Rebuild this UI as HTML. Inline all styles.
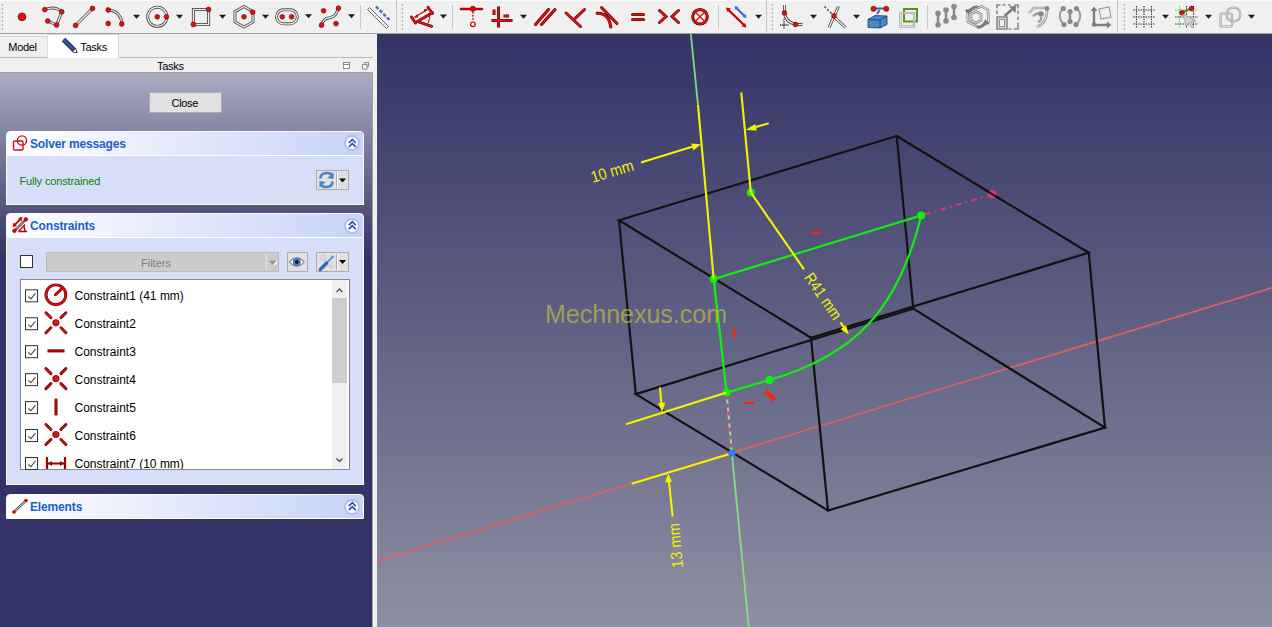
<!DOCTYPE html>
<html><head><meta charset="utf-8">
<style>
*{box-sizing:border-box;margin:0;padding:0}
html,body{width:1272px;height:627px;overflow:hidden;background:#f0f0f0;font-family:"Liberation Sans",sans-serif;position:relative}
.abs{position:absolute}
#tb{position:absolute;left:0;top:0;width:1272px;height:34px;background:#f0f0f0;border-bottom:1px solid #a0a0a0}
#tb svg{position:absolute;left:0;top:0}
#left{position:absolute;left:0;top:34px;width:377px;height:593px;background:#f0f0f0}
#panel{position:absolute;left:0;top:38px;width:373px;height:555px;border-top:1px solid #a0a0a0;border-right:1px solid #a0a0a0;
 background:linear-gradient(to bottom, rgb(171,171,193) 0px, rgb(51,51,101) 186px, rgb(51,51,101) 100%)}
#vp{position:absolute;left:377px;top:34px;width:895px;height:593px;
 background:linear-gradient(to bottom, rgb(51,51,102) 0%, rgb(143,143,163) 100%)}
#vp svg{position:absolute;left:-377px;top:-34px}
.t{position:absolute;white-space:nowrap;font-size:12px;color:#000;line-height:1}
.box{position:absolute;left:6px;width:358px}
.hdr{position:absolute;left:0;top:0;width:358px;height:25px;border:1px solid #fff;border-radius:4px 4px 0 0;
 background:linear-gradient(to right,#ffffff 0%,#c7d3f7 100%)}
.cnt{position:absolute;left:0;width:358px;background:#d6dff7;border:1px solid #fff;border-top:none}
.htxt{position:absolute;left:24px;top:6px;font-size:12px;font-weight:bold;color:#215dc6;white-space:nowrap;line-height:1;letter-spacing:-0.15px}
.coll{position:absolute;width:16px;height:16px;border-radius:50%;background:#fff;border:2px solid #b8c0d8}
</style></head><body>
<div id="tb"><svg width="1272" height="34" viewBox="0 0 1272 34">
<defs>
<g id="arr"><path d="M-3.5,-2 L3.5,-2 L0,2 Z" fill="#1a1a1a"/></g>
<g id="grip"><path d="M3,4.8 L3,6.6 L1.2,6.6 Z M3,8.8 L3,10.600000000000001 L1.2,10.600000000000001 Z M3,12.8 L3,14.600000000000001 L1.2,14.600000000000001 Z M3,16.8 L3,18.6 L1.2,18.6 Z M3,20.8 L3,22.6 L1.2,22.6 Z M3,24.8 L3,26.6 L1.2,26.6 Z M3,28.8 L3,30.6 L1.2,30.6 Z " fill="#8a8a8a"/></g>
</defs>
<rect x="0" y="0" width="1272" height="1" fill="#fbfbfb"/>
<!-- toolbar 1 -->
<use href="#grip" x="0" y="-1"/>
<g fill="#e01010" stroke="#6a0000" stroke-width="0.7">
<circle cx="22" cy="16.8" r="3.9"/>
</g>
<!-- double lines (outline) -->
<g fill="none" stroke="#505050" stroke-width="3">
<path d="M44.8,9.6 Q55,5.5 61.8,11.8 L56.6,25 L47.8,21"/>
<path d="M75.5,25.5 L92.5,8.5"/>
<path d="M108.2,10 A13.6,13.6 0 0 1 121.8,24"/>
<circle cx="157.3" cy="16.8" r="9.6"/>
<rect x="193.4" y="9.5" width="15.2" height="15"/>
<path d="M244,6.5 L253,11.6 L253,22 L244,27.1 L235,22 L235,11.6 Z"/>
<rect x="276.5" y="9.8" width="20.8" height="14" rx="7"/>
<path d="M321.5,25.2 C324,16 330,19 334,16 C337,14 337,11 338.5,8.2"/>
</g>
<g fill="none" stroke="#f2f2f2" stroke-width="1.2">
<path d="M44.8,9.6 Q55,5.5 61.8,11.8 L56.6,25 L47.8,21"/>
<path d="M75.5,25.5 L92.5,8.5"/>
<path d="M108.2,10 A13.6,13.6 0 0 1 121.8,24"/>
<circle cx="157.3" cy="16.8" r="9.6"/>
<rect x="193.4" y="9.5" width="15.2" height="15"/>
<path d="M244,6.5 L253,11.6 L253,22 L244,27.1 L235,22 L235,11.6 Z"/>
<rect x="276.5" y="9.8" width="20.8" height="14" rx="7"/>
<path d="M321.5,25.2 C324,16 330,19 334,16 C337,14 337,11 338.5,8.2"/>
</g>
<g fill="#e01010" stroke="#6a0000" stroke-width="0.6">
<circle cx="44.8" cy="9.6" r="2.4"/><circle cx="61.8" cy="11.8" r="2.4"/><circle cx="47.8" cy="21" r="2.4"/><circle cx="56.6" cy="25" r="2.4"/>
<circle cx="75.5" cy="25.5" r="2.4"/><circle cx="92.5" cy="8.5" r="2.4"/>
<circle cx="108.2" cy="10" r="2.4"/><circle cx="108.2" cy="23.5" r="2.4"/><circle cx="121.8" cy="24" r="2.4"/>
<circle cx="157.3" cy="16.8" r="2.4"/><circle cx="166.4" cy="16.8" r="2.4"/>
<circle cx="193.4" cy="24.5" r="2.4"/><circle cx="208.6" cy="9.5" r="2.4"/>
<circle cx="244" cy="16.8" r="2.4"/><circle cx="252.6" cy="12.2" r="2.4"/>
<circle cx="282.3" cy="16.8" r="2.4"/><circle cx="291.6" cy="16.8" r="2.4"/>
<circle cx="323.6" cy="10.8" r="2.4"/><circle cx="338.5" cy="8.2" r="2.4"/><circle cx="321.5" cy="25.2" r="2.4"/><circle cx="336" cy="23.6" r="2.4"/>
</g>
<use href="#arr" x="136.5" y="16.8"/><use href="#arr" x="179.5" y="16.8"/><use href="#arr" x="222.5" y="16.8"/><use href="#arr" x="265.5" y="16.8"/><use href="#arr" x="308.5" y="16.3"/><use href="#arr" x="351.5" y="16.3"/>
<rect x="360" y="5" width="1" height="24" fill="#c8c8c8"/>
<!-- construction -->
<path d="M367.5,9.5 L369.5,7.5 L388.5,26.5 L386.5,28.5 Z" fill="#f4f4f4" stroke="#555" stroke-width="0.9"/>
<path d="M376,6.5 L390,20.5" stroke="#3a6fb0" stroke-width="2.3" stroke-dasharray="3.4,1.8"/>
<rect x="396" y="0" width="1" height="34" fill="#c4c4c4"/>
<!-- toolbar 2 -->
<use href="#grip" x="400" y="-1"/>
<g fill="none" stroke="#5a0000" stroke-width="2.8" stroke-linecap="round">
<path d="M417.3,21.5 L432.4,12.7 M417.3,21.5 L431.7,26.3"/>
<path d="M411.5,17 L415.5,23 M428,7.2 L432.5,13.5"/>
</g>
<g fill="none" stroke="#e01010" stroke-width="1.7" stroke-linecap="round">
<path d="M417.3,21.5 L432.4,12.7 M417.3,21.5 L431.7,26.3"/>
<path d="M411.5,17 L415.5,23 M428,7.2 L432.5,13.5"/>
</g>
<path d="M428.5,13.8 Q431,18.5 428.2,23.2" stroke="#b00000" stroke-width="1" fill="none"/>
<path d="M415,17 L427,9.8" stroke="#c00000" stroke-width="1.1"/>
<path d="M413.5,17.8 L417.5,14 L418,17.5 Z M428.3,9 L424.3,12.6 L423.9,9.3 Z" fill="#d00000"/>
<use href="#arr" x="443.4" y="16.5"/>
<rect x="452" y="5" width="1" height="24" fill="#c8c8c8"/>
<path d="M461,9 L482,9" stroke="#c00000" stroke-width="2.6" stroke-linecap="round"/>
<circle cx="472.9" cy="8.8" r="2.6" fill="#d00" stroke="#600" stroke-width="0.6"/>
<path d="M472.9,12 L472.9,21" stroke="#c00000" stroke-width="1.5" stroke-dasharray="1.5,1.6"/>
<circle cx="472.9" cy="24.3" r="2.3" fill="#fff" stroke="#b00" stroke-width="1.2"/>
<g stroke="#5a0000" stroke-width="3" fill="none">
<path d="M498.5,6.5 L498.5,27.5 M491.5,20.5 L512.5,20.5 M494,9.5 L494,15 M503.5,16 L509,16"/>
</g>
<g stroke="#e01010" stroke-width="1.9" fill="none">
<path d="M498.5,7 L498.5,27 M492,20.5 L512,20.5 M494,10 L494,14.5 M504,16 L508.5,16"/>
</g>
<use href="#arr" x="523.5" y="16.8"/>
<g stroke="#5a0000" stroke-width="3" fill="none" stroke-linecap="round">
<path d="M535.5,24.5 L548.5,9.5 M541.5,24.5 L555,9.5"/>
<path d="M566,13 L580.5,26.5 M574,19.5 L584.5,9.5"/>
<path d="M601.5,7.5 L617,23.5 M597,13.3 Q609,13 610.7,27"/>
<path d="M632.5,14.5 L643.5,14.5 M632.5,19.5 L643.5,19.5"/>
<path d="M659.5,10.5 L666,16.5 L659.5,22.5 M678.5,10.5 L672,16.5 L678.5,22.5"/>
<circle cx="700" cy="16.8" r="7.3"/>
</g>
<g stroke="#e01010" stroke-width="1.8" fill="none" stroke-linecap="round">
<path d="M535.5,24.5 L548.5,9.5 M541.5,24.5 L555,9.5"/>
<path d="M566,13 L580.5,26.5 M574,19.5 L584.5,9.5"/>
<path d="M601.5,7.5 L617,23.5 M597,13.3 Q609,13 610.7,27"/>
<path d="M632.5,14.5 L643.5,14.5 M632.5,19.5 L643.5,19.5"/>
<path d="M659.5,10.5 L666,16.5 L659.5,22.5 M678.5,10.5 L672,16.5 L678.5,22.5"/>
<circle cx="700" cy="16.8" r="7.3"/>
<path d="M696,12.8 L704,20.8 M704,12.8 L696,20.8" stroke-width="1.3"/>
</g>
<rect x="718" y="5" width="1" height="24" fill="#c8c8c8"/>
<path d="M727,8.5 L745.5,26.5" stroke="#c00000" stroke-width="2.2"/>
<path d="M726,7.5 L731,8.5 L727.5,12 Z M746.5,27.5 L741.5,26.5 L745,23 Z" fill="#d00"/>
<path d="M736,7.5 L745,16.5" stroke="#3a70c0" stroke-width="2.2"/>
<path d="M734.5,6 L738.5,7 L735.5,10 Z M746.5,18 L742.5,17 L745.5,14 Z" fill="#3a70c0"/>
<use href="#arr" x="758.5" y="16.8"/>
<rect x="766" y="0" width="1" height="34" fill="#c4c4c4"/>
<!-- toolbar 3 -->
<use href="#grip" x="770" y="-1"/>
<g fill="none" stroke="#505050" stroke-width="3"><path d="M784.5,5 L784.5,13 Q785.5,22 795.5,24.5 L802.5,24.5"/></g>
<g fill="none" stroke="#f2f2f2" stroke-width="1.2"><path d="M784.5,5 L784.5,13 Q785.5,22 795.5,24.5 L802.5,24.5"/></g>
<path d="M784,19 L784,29 M780,25 L789,25" stroke="#333" stroke-width="1.3" stroke-dasharray="1.3,0.8"/>
<circle cx="784.5" cy="13" r="2.4" fill="#e01010" stroke="#6a0000" stroke-width="0.6"/>
<circle cx="795.5" cy="24.5" r="2.4" fill="#e01010" stroke="#6a0000" stroke-width="0.6"/>
<use href="#arr" x="813.5" y="16.8"/>
<g fill="none" stroke="#505050" stroke-width="3"><path d="M838.5,6.5 L829,27.5 M834.5,17 L845.5,27.5"/></g>
<g fill="none" stroke="#f2f2f2" stroke-width="1.2"><path d="M838.5,6.5 L829,27.5 M834.5,17 L845.5,27.5"/></g>
<path d="M824.5,6.5 L832,14" stroke="#505050" stroke-width="1.6" stroke-dasharray="2,2"/>
<circle cx="834" cy="16" r="2.4" fill="#e01010" stroke="#6a0000" stroke-width="0.6"/>
<use href="#arr" x="856.5" y="16.8"/>
<path d="M868,19.5 L875,15.5 L887,16 L887,24.5 L880,28 L868,27.5 Z" fill="#4a86c8" stroke="#1a3a6a" stroke-width="0.8"/>
<path d="M868,19.5 L880,20 L887,16 M880,20 L880,28" fill="none" stroke="#1a3a6a" stroke-width="0.8"/>
<path d="M874,8.5 L886,8.5" stroke="#3a6aa8" stroke-width="2"/>
<path d="M879.5,10 L877,14" stroke="#3a6aa8" stroke-width="2"/>
<circle cx="873.5" cy="8.8" r="2.6" fill="#e01010" stroke="#6a0000" stroke-width="0.6"/>
<circle cx="886.3" cy="8.8" r="2.6" fill="#e01010" stroke="#6a0000" stroke-width="0.6"/>
<rect x="904" y="9" width="13" height="12.5" fill="none" stroke="#4f9a10" stroke-width="2"/>
<rect x="900.5" y="13" width="13.5" height="13.5" fill="none" stroke="#9a9a9a" stroke-width="2.2"/>
<rect x="900.5" y="13" width="13.5" height="13.5" fill="none" stroke="#f2f2f2" stroke-width="0.8"/>
<rect x="927" y="5" width="1" height="24" fill="#c8c8c8"/>
<g fill="#8a8a8a">
<path d="M938,14 L938,24" stroke="#8a8a8a" stroke-width="2.5"/><circle cx="938" cy="13.3" r="2.8"/><circle cx="938" cy="25" r="2.8"/>
<path d="M946,10 L946,21" stroke="#8a8a8a" stroke-width="2.5"/><circle cx="946" cy="10" r="2.8"/><circle cx="946" cy="21" r="2.8"/>
<path d="M954,6 L954,18" stroke="#8a8a8a" stroke-width="2.5"/><circle cx="954" cy="6.5" r="2.8"/><circle cx="954" cy="17.5" r="2.8"/>
</g>
<g fill="none" stroke="#8a8a8a" stroke-width="2.6"><path d="M982,6.5 L988,10 L988.5,22 L979,27.5 L968,22 L967.5,10.5 Z"/><path d="M976,11.5 L981,14 L981,20.5 L976,23 L971,20.5 L971,14 Z"/></g>
<g fill="none" stroke="#f0f0f0" stroke-width="0.9"><path d="M982,6.5 L988,10 L988.5,22 L979,27.5 L968,22 L967.5,10.5 Z"/><path d="M976,11.5 L981,14 L981,20.5 L976,23 L971,20.5 L971,14 Z"/></g>
<path d="M968,12 Q970,6 977,5.5 L979,7.5 Q973,8 971,12.5 Z M964.5,10 L970.5,9 L969,15 Z" fill="#7a7a7a"/>
<path d="M987,22 Q985,28 978,28.5 L976,26.5 Q982,26 984,21.5 Z M989.5,24 L983.5,25 L985,19 Z" fill="#7a7a7a"/>
<g fill="none" stroke="#8a8a8a" stroke-width="1.6">
<path d="M997,8.5 L997,5 L1000.5,5 M1002.5,5 L1005.5,5 M1008,5 L1011,5 M1014,5 L1018,5 L1018,8.5 M1018,10.5 L1018,14 M1018,16.5 L1018,20 M1018,22.5 L1018,29 L1014,29 M1011.5,29 L1008.5,29 M997,10.5 L997,14"/>
</g>
<rect x="997" y="17" width="10" height="12" fill="none" stroke="#8a8a8a" stroke-width="1.6"/><rect x="999.3" y="19.3" width="5.4" height="7.4" fill="none" stroke="#8a8a8a" stroke-width="1.2"/>
<path d="M1004.5,16 L1012,9.5" stroke="#7a7a7a" stroke-width="2.6"/><path d="M1009,6.5 L1016,6 L1015.5,13 Z" fill="#7a7a7a"/>
<g fill="none" stroke="#9a9a9a" stroke-width="2.4"><path d="M1029,13 L1034,8 L1047,8 Q1048,22 1037,27 M1033,16 Q1038,12 1042,14 M1038,22 Q1042,20 1041,17"/></g>
<g fill="none" stroke="#f2f2f2" stroke-width="0.8"><path d="M1029,13 L1034,8 L1047,8 Q1048,22 1037,27"/></g>
<circle cx="1047" cy="8.5" r="2.4" fill="#8a8a8a"/><circle cx="1041" cy="14" r="2.8" fill="#8a8a8a"/>
<g fill="none" stroke="#9a9a9a" stroke-width="1.8"><path d="M1063,8 Q1056,16 1064,25 M1077,8 Q1084,16 1076,25"/></g>
<path d="M1070,11 L1070,21" stroke="#8a8a8a" stroke-width="2.4"/>
<g fill="#8a8a8a"><circle cx="1063.3" cy="8.5" r="2.6"/><circle cx="1064" cy="24.5" r="2.6"/><circle cx="1076.5" cy="8.5" r="2.6"/><circle cx="1076" cy="24.5" r="2.6"/><circle cx="1070" cy="11.5" r="2.6"/><circle cx="1070" cy="21.5" r="2.6"/></g>
<path d="M1094,25 L1094,9 M1094,25 L1109,25" stroke="#7e7e7e" stroke-width="2.4" fill="none"/>
<path d="M1090.5,11 L1094,6.5 L1097.5,11 Z M1107,21.5 L1111.5,25 L1107,28.5 Z" fill="#7e7e7e"/>
<circle cx="1094" cy="24.5" r="2.3" fill="#7e7e7e"/>
<path d="M1099,9 L1109,7 L1111,17 L1101,19 Z" fill="none" stroke="#9a9a9a" stroke-width="1.1"/>
<rect x="1117" y="0" width="1" height="34" fill="#c4c4c4"/>
<!-- toolbar 4 -->
<use href="#grip" x="1122" y="-1"/>
<g stroke="#3a3a3a" stroke-width="1.1" stroke-dasharray="1.6,0.9" fill="none">
<path d="M1136.5,6 L1136.5,28 M1144,6 L1144,28 M1151.5,6 L1151.5,28 M1133,10 L1155,10 M1133,17 L1155,17 M1133,24 L1155,24"/>
</g>
<use href="#arr" x="1165.5" y="16.8"/>
<g stroke="#3a3a3a" stroke-width="1.1" stroke-dasharray="1.6,0.9" fill="none">
<path d="M1186.5,6 L1186.5,28 M1193.5,6 L1193.5,28 M1175,17 L1198,17 M1175,24 L1198,24"/>
</g>
<path d="M1179.5,6 L1179.5,28 M1175,10 L1198,10" stroke="#40e040" stroke-width="1.1" stroke-dasharray="1.6,0.9"/>
<path d="M1182,12.5 L1192,8" stroke="#40a020" stroke-width="2"/>
<circle cx="1182" cy="12.8" r="2.4" fill="#e01010" stroke="#6a0000" stroke-width="0.6"/>
<circle cx="1191.5" cy="8.5" r="2.4" fill="#e01010" stroke="#6a0000" stroke-width="0.6"/>
<path d="M1183,14 L1196,21 L1191,22 L1194,27 L1192,28 L1189,23 L1186,26 Z" fill="#d0d0cc" stroke="#9a9a9a" stroke-width="0.7"/>
<use href="#arr" x="1208.5" y="16.8"/>
<rect x="1220.5" y="13.5" width="11.5" height="13" rx="1.5" fill="none" stroke="#9a9a9a" stroke-width="2.2"/>
<rect x="1220.5" y="13.5" width="11.5" height="13" rx="1.5" fill="none" stroke="#f2f2f2" stroke-width="0.7"/>
<circle cx="1233.5" cy="14.5" r="7" fill="none" stroke="#9a9a9a" stroke-width="2.2"/>
<circle cx="1233.5" cy="14.5" r="7" fill="none" stroke="#f2f2f2" stroke-width="0.7"/>
<use href="#arr" x="1251.5" y="16.8"/>
</svg>
</div>
<div id="left">
  <!-- tab bar -->
  <div class="abs" style="left:0;top:23px;width:373px;height:1px;background:#b9b9b9"></div>
  <div class="abs" style="left:0;top:2px;width:48px;height:21px;border-top:1px solid #d9d9d9;border-right:1px solid #d9d9d9;background:#f0f0f0"></div>
  <div class="abs" style="left:47px;top:0px;width:72px;height:24px;background:#fff;border:1px solid #d9d9d9;border-bottom:none"></div>
  <div class="t" style="left:8.3px;top:8px;font-size:11px;letter-spacing:-0.3px">Model</div>
  <div class="t" style="left:80.3px;top:8px;font-size:11px;letter-spacing:-0.3px">Tasks</div>
  <div class="t" style="left:157px;top:26.6px;font-size:11px;letter-spacing:-0.3px">Tasks</div>
  <div id="panel"></div>
</div>
<div id="vp"><svg width="1272" height="627" viewBox="0 0 1272 627" style="position:absolute;left:-377px;top:-34px">
<defs><clipPath id="vpc"><rect x="377" y="34" width="895" height="593"/></clipPath></defs>
<g clip-path="url(#vpc)">
<!-- X axis -->
<path d="M377,561.1 L1272,287.9" stroke="#d86262" stroke-width="1.8" fill="none"/>
<!-- Y axis segments -->
<path d="M690.8,34 L698,104.8" stroke="#78e078" stroke-width="1.8" fill="none"/>
<path d="M731.9,453.2 L748.7,627" stroke="#80e080" stroke-width="1.8" fill="none"/>
<!-- box edges -->
<g stroke="#121212" stroke-width="2.2" fill="none" stroke-linecap="round">
<path d="M896.7,136 L619,220.3 L811,337.8 L1088.8,252.7 Z"/>
<path d="M635.8,394.1 L828,510.5 L1105,427.6 L913.3,308.6 Z"/>
<path d="M619,220.3 L635.8,394.1 M811,337.8 L828,510.5 M1088.8,252.7 L1105,427.6 M896.7,136 L913.3,308.6"/>
</g>
<!-- dashed P3-origin -->
<path d="M726.6,392.6 L731.9,453.2" stroke="#90e890" stroke-width="2" fill="none"/>
<path d="M726.6,392.6 L731.9,453.2" stroke="#c83a80" stroke-width="2" fill="none" stroke-dasharray="4,4" stroke-dashoffset="-3"/>
<!-- magenta dash-dot -->
<path d="M921.2,215.5 L992.4,194.3" stroke="#d03a78" stroke-width="2.2" fill="none" stroke-dasharray="5.4,4.3,1.8,4.5" stroke-dashoffset="-4.3"/>
<!-- sketch -->
<g stroke="#10f010" stroke-width="2.2" fill="none">
<path d="M713.7,279.1 L921.2,215.5"/>
<path d="M713.7,279.1 L726.6,392.6"/>
<path d="M726.6,392.6 L769.5,380"/>
<path d="M769.5,380 C856,354.8 898.4,308.6 921.2,215.5"/>
</g>
<g fill="#10f010">
<circle cx="713.7" cy="279.1" r="4"/>
<circle cx="921.2" cy="215.5" r="4"/>
<circle cx="726.6" cy="392.6" r="4"/>
<circle cx="769.5" cy="380" r="4"/>
<circle cx="750.8" cy="192.4" r="4"/>
</g>
<!-- yellow dims -->
<g stroke="#f4f400" stroke-width="2.1" fill="none">
<path d="M698,104.8 L713.7,279.1"/>
<path d="M741.3,92.5 L750.8,192.4"/>
<path d="M641,162.5 L693,146.6"/>
<path d="M768.8,123.3 L754,127.6"/>
<path d="M750.8,192.4 L804,269.3"/>
<path d="M840.5,322.4 L845,328.8"/>
<path d="M625.9,424.3 L726.6,392.6"/>
<path d="M660,387.4 L661.4,404"/>
<path d="M631.7,483.7 L731.9,453.2"/>
<path d="M672.6,516.5 L669,481.5"/>
</g>
<g fill="#f4f400">
<path d="M701,144.3 L691.3,143.6 L693.4,150.4 Z"/>
<path d="M745.6,130 L755.2,123.9 L756.8,130.6 Z"/>
<path d="M848.8,334.6 L840.4,329.3 L846.1,325.3 Z"/>
<path d="M662.1,412.3 L658.2,403.2 L665.2,402.6 Z"/>
<path d="M668.2,473.4 L665.1,482.6 L672.1,481.9 Z"/>
</g>
<circle cx="992.4" cy="194.3" r="4.3" fill="#d03a78"/>
<path d="M979,186 L1000,199" stroke="#121212" stroke-width="2"/>
<circle cx="731.9" cy="453.2" r="3.6" fill="#3a7ae8"/>
<!-- red constraint glyphs -->
<g stroke="#ff2200" stroke-width="2.2" fill="none">
<path d="M810.8,233 L821,233"/>
<path d="M734,327.8 L734,338"/>
<path d="M743.9,403 L754.1,403"/>
<path d="M766.3,390.3 L775.7,399.4"/>
<path d="M764,393.6 Q771,393 772.3,401.5"/>
</g>
</g>
<!-- texts -->
<g font-family="Liberation Sans" font-size="16" fill="#f0f000">
<text x="0" y="0" transform="translate(592.7,182.8) rotate(-16.7) scale(0.9,1)">10 mm</text>
<text x="0" y="0" transform="translate(803.5,277.5) rotate(55.4) scale(0.88,1)">R41 mm</text>
<text x="0" y="0" transform="translate(683,567.5) rotate(-95) scale(0.92,1)">13 mm</text>
</g>
<text x="545" y="322.7" font-family="Liberation Sans" font-size="25" fill="#c8c040" fill-opacity="0.66">Mechnexus.com</text>
</svg>
</div>
<!-- Close button -->
<div class="abs" style="left:149px;top:92px;width:73px;height:21px;background:#e1e1e1;border:1px solid #adadad"></div>
<div class="t" style="left:171.5px;top:98px;font-size:11px;letter-spacing:-0.3px">Close</div>

<!-- Solver messages -->
<div class="box" style="top:131px;height:74px">
  <div class="hdr"></div>
  <div class="cnt" style="top:25px;height:49px"></div>
</div>
<div class="htxt" style="left:30px;top:137.8px">Solver messages</div>
<div class="coll" style="left:344.4px;top:135.4px"></div>
<div class="t" style="left:19.5px;top:175.8px;font-size:11px;color:#0b800b;letter-spacing:-0.15px">Fully constrained</div>
<div class="abs" style="left:316px;top:170px;width:33px;height:20px;background:#e1e1e1;border:1px solid #adadad"></div>
<div class="abs" style="left:336px;top:172px;width:1px;height:16px;background:#adadad"></div>

<!-- Constraints -->
<div class="box" style="top:213px;height:272px">
  <div class="hdr"></div>
  <div class="cnt" style="top:25px;height:247px"></div>
</div>
<div class="htxt" style="left:30px;top:219.5px">Constraints</div>
<div class="coll" style="left:344.4px;top:217.6px"></div>
<div class="abs" style="left:20px;top:254.5px;width:13px;height:13px;background:#fff;border:1px solid #333"></div>
<div class="abs" style="left:46px;top:252px;width:233px;height:20px;background:#cccccc;border:1px solid #bcbcbc"></div>
<div class="abs" style="left:264.5px;top:254px;width:1px;height:16px;background:#a0a0a0"></div>
<div class="t" style="left:141px;top:257.5px;font-size:11px;color:#808080">Filters</div>
<div class="abs" style="left:287px;top:252px;width:21px;height:20px;background:#e1e1e1;border:1px solid #adadad"></div>
<div class="abs" style="left:316px;top:252px;width:33px;height:20px;background:#e1e1e1;border:1px solid #adadad"></div>
<div class="abs" style="left:336px;top:254px;width:1px;height:16px;background:#adadad"></div>
<!-- list -->
<div class="abs" style="left:20px;top:279px;width:330px;height:191px;background:#fff;border:1px solid #828790"></div>
<div class="abs" style="left:332px;top:280px;width:15px;height:189px;background:#f0f0f0"></div>
<div class="abs" style="left:332px;top:298px;width:15px;height:85px;background:#cdcdcd"></div>
<div class="t" style="left:74.5px;top:290px">Constraint1 (41 mm)</div>
<div class="t" style="left:74.5px;top:318px">Constraint2</div>
<div class="t" style="left:74.5px;top:346px">Constraint3</div>
<div class="t" style="left:74.5px;top:374px">Constraint4</div>
<div class="t" style="left:74.5px;top:402px">Constraint5</div>
<div class="t" style="left:74.5px;top:430px">Constraint6</div>
<div class="abs" style="left:21px;top:280px;width:311px;height:189px;overflow:hidden"><div class="t" style="left:53.5px;top:178px">Constraint7 (10 mm)</div></div>

<!-- Elements -->
<div class="box" style="top:494px;height:25px">
  <div class="hdr" style="height:25px"></div>
</div>
<div class="htxt" style="left:30px;top:501px">Elements</div>
<div class="coll" style="left:344.4px;top:498.6px"></div>

<svg class="abs" style="left:0;top:0" width="377" height="627" viewBox="0 0 377 627">
<path d="M348.8,143.0 L352.3,139.5 L355.8,143.0 M348.8,147.0 L352.3,143.5 L355.8,147.0" fill="none" stroke="#1d4fc0" stroke-width="1.7"/>
<path d="M348.8,225.2 L352.3,221.7 L355.8,225.2 M348.8,229.2 L352.3,225.7 L355.8,229.2" fill="none" stroke="#1d4fc0" stroke-width="1.7"/>
<path d="M348.8,506.2 L352.3,502.7 L355.8,506.2 M348.8,510.2 L352.3,506.7 L355.8,510.2" fill="none" stroke="#1d4fc0" stroke-width="1.7"/>
<rect x="13.5" y="141" width="9.5" height="9" rx="1" fill="none" stroke="#d01010" stroke-width="1.4"/><circle cx="22" cy="140.5" r="4.6" fill="none" stroke="#d01010" stroke-width="1.4"/>
<path d="M14.5,230.8 L25.9,219.3" stroke="#555" stroke-width="2.4"/><path d="M14.5,230.8 L25.9,219.3" stroke="#eee" stroke-width="1" stroke-dasharray="1,1"/>
<path d="M13.5,226 L21.5,218" stroke="#d00" stroke-width="1.8"/><path d="M12.5,227 L13.5,222.5 L17,226 Z M22.5,217 L18,218 L21.5,221.5 Z" fill="#d00"/>
<path d="M18.5,231.5 L27,231.5 M18.5,231.5 L25,224.5 M24,226 L25,231" stroke="#b00" stroke-width="1.3" fill="none"/>
<circle cx="14.4" cy="230.8" r="1.9" fill="#d00" stroke="#700" stroke-width="0.5"/><circle cx="25.9" cy="219.3" r="1.9" fill="#d00" stroke="#700" stroke-width="0.5"/>
<path d="M14,512 L26,500.5" stroke="#444" stroke-width="2.4"/><path d="M14,512 L26,500.5" stroke="#eee" stroke-width="0.9"/><circle cx="14" cy="512" r="1.8" fill="#d00"/><circle cx="26" cy="500.5" r="1.8" fill="#d00"/>
<g fill="none" stroke="#4a82c4" stroke-width="2.6"><path d="M320.5,178.5 Q320.5,173 327,173 Q331,173 332.5,175.5"/><path d="M332.5,181.5 Q332.5,187 326,187 Q322,187 320.5,184.5"/></g>
<path d="M333.5,172.5 L333.5,179 L327.5,178 Z M319.5,187.5 L319.5,181 L325.5,182 Z" fill="#4a82c4"/>
<path d="M339.0,178.5 L346.0,178.5 L342.5,182.5 Z" fill="#000"/>
<path d="M339.0,260 L346.0,260 L342.5,264 Z" fill="#000"/>
<path d="M268.5,260.5 L276.5,260.5 L272.5,265 Z" fill="#999"/><path d="M274,265 L277,262" stroke="#fff" stroke-width="1.2"/>
<rect x="265.5" y="254" width="1" height="16" fill="#fff"/><rect x="337" y="172" width="1" height="16" fill="#fff"/><rect x="337" y="254" width="1" height="16" fill="#fff"/>
<path d="M289.5,262 Q296.8,253.5 304.2,262 Q296.8,270.5 289.5,262 Z" fill="#fff" stroke="#777" stroke-width="1.1"/><circle cx="296.8" cy="262" r="4" fill="#3d7ad0"/><circle cx="296.8" cy="262" r="1.9" fill="#222"/>
<path d="M324.5,259.5 L332.5,268.5" stroke="#cfcfcf" stroke-width="2.2"/><circle cx="323" cy="257.5" r="2.3" fill="none" stroke="#cfcfcf" stroke-width="1.3"/><path d="M326,263.5 L333.5,256" stroke="#5a90d8" stroke-width="1.9"/><path d="M320.2,269.6 L326.5,263.3" stroke="#2a6ac0" stroke-width="3.4" stroke-linecap="round"/>
<path d="M336.5,292 L339.5,289 L342.5,292" fill="none" stroke="#555" stroke-width="1.4"/><path d="M336.5,458.5 L339.5,461.5 L342.5,458.5" fill="none" stroke="#555" stroke-width="1.4"/>
<rect x="25.5" y="289.8" width="12" height="12" fill="#fff" stroke="#333" stroke-width="1"/><path d="M28.3,296.6 L30.9,298.90000000000003 L35.4,293.3" fill="none" stroke="#444" stroke-width="1.1"/>
<rect x="25.5" y="317.75" width="12" height="12" fill="#fff" stroke="#333" stroke-width="1"/><path d="M28.3,324.55 L30.9,326.85 L35.4,321.25" fill="none" stroke="#444" stroke-width="1.1"/>
<rect x="25.5" y="345.7" width="12" height="12" fill="#fff" stroke="#333" stroke-width="1"/><path d="M28.3,352.5 L30.9,354.8 L35.4,349.2" fill="none" stroke="#444" stroke-width="1.1"/>
<rect x="25.5" y="373.65000000000003" width="12" height="12" fill="#fff" stroke="#333" stroke-width="1"/><path d="M28.3,380.45000000000005 L30.9,382.75000000000006 L35.4,377.15000000000003" fill="none" stroke="#444" stroke-width="1.1"/>
<rect x="25.5" y="401.6" width="12" height="12" fill="#fff" stroke="#333" stroke-width="1"/><path d="M28.3,408.40000000000003 L30.9,410.70000000000005 L35.4,405.1" fill="none" stroke="#444" stroke-width="1.1"/>
<rect x="25.5" y="429.55" width="12" height="12" fill="#fff" stroke="#333" stroke-width="1"/><path d="M28.3,436.35 L30.9,438.65000000000003 L35.4,433.05" fill="none" stroke="#444" stroke-width="1.1"/>
<rect x="25.5" y="457.5" width="12" height="12" fill="#fff" stroke="#333" stroke-width="1"/><path d="M28.3,464.3 L30.9,466.6 L35.4,461.0" fill="none" stroke="#444" stroke-width="1.1"/>
<circle cx="55.9" cy="294.8" r="9.9" fill="none" stroke="#6a0000" stroke-width="2.9"/><circle cx="55.9" cy="294.8" r="9.9" fill="none" stroke="#cc1010" stroke-width="1.9"/>
<path d="M55.4,294.8 L61.4,289.1" stroke="#6a0000" stroke-width="2.9" stroke-linecap="round"/><path d="M55.4,294.8 L61.4,289.1" stroke="#cc1010" stroke-width="1.8" stroke-linecap="round"/>
<g stroke="#5a0000" stroke-width="2.9" stroke-linecap="round"><path d="M45.9,312.75 L50.9,317.75 M65.9,312.75 L60.9,317.75 M45.9,332.75 L50.9,327.75 M65.9,332.75 L60.9,327.75"/></g><path d="M45.9,312.75 L50.9,317.75 M65.9,312.75 L60.9,317.75 M45.9,332.75 L50.9,327.75 M65.9,332.75 L60.9,327.75" stroke="#cc1010" stroke-width="1.8" stroke-linecap="round"/><circle cx="55.9" cy="322.75" r="3.3" fill="#d01818" stroke="#7a0000" stroke-width="0.6"/>
<g stroke="#5a0000" stroke-width="2.9" stroke-linecap="round"><path d="M45.9,368.65000000000003 L50.9,373.65000000000003 M65.9,368.65000000000003 L60.9,373.65000000000003 M45.9,388.65000000000003 L50.9,383.65000000000003 M65.9,388.65000000000003 L60.9,383.65000000000003"/></g><path d="M45.9,368.65000000000003 L50.9,373.65000000000003 M65.9,368.65000000000003 L60.9,373.65000000000003 M45.9,388.65000000000003 L50.9,383.65000000000003 M65.9,388.65000000000003 L60.9,383.65000000000003" stroke="#cc1010" stroke-width="1.8" stroke-linecap="round"/><circle cx="55.9" cy="378.65000000000003" r="3.3" fill="#d01818" stroke="#7a0000" stroke-width="0.6"/>
<g stroke="#5a0000" stroke-width="2.9" stroke-linecap="round"><path d="M45.9,424.55 L50.9,429.55 M65.9,424.55 L60.9,429.55 M45.9,444.55 L50.9,439.55 M65.9,444.55 L60.9,439.55"/></g><path d="M45.9,424.55 L50.9,429.55 M65.9,424.55 L60.9,429.55 M45.9,444.55 L50.9,439.55 M65.9,444.55 L60.9,439.55" stroke="#cc1010" stroke-width="1.8" stroke-linecap="round"/><circle cx="55.9" cy="434.55" r="3.3" fill="#d01818" stroke="#7a0000" stroke-width="0.6"/>
<path d="M47.5,350.9 L64.5,350.9" stroke="#5a0000" stroke-width="3"/><path d="M48,350.9 L64,350.9" stroke="#b00000" stroke-width="2"/>
<path d="M56,398.6 L56,415.4" stroke="#5a0000" stroke-width="3"/><path d="M56,399 L56,415" stroke="#c00000" stroke-width="2"/>
<g clip-path="url(#lc)">
<path d="M47,457 L47,470 M65,457 L65,470 M48,463.5 L64,463.5" stroke="#a00000" stroke-width="2.2"/><path d="M48,463.5 L52,461 L52,466 Z M64,463.5 L60,461 L60,466 Z" fill="#a00000"/>
</g>
<defs><clipPath id="lc"><rect x="21" y="280" width="311" height="189"/></clipPath></defs>
<rect x="343.5" y="62.5" width="6" height="6" fill="#fff" stroke="#8a8a8a" stroke-width="1"/><path d="M343.5,64.5 L349.5,64.5" stroke="#8a8a8a" stroke-width="1"/>
<path d="M364.5,64 L364.5,62.5 L368.5,62.5 L368.5,66.5 L367,66.5" fill="none" stroke="#8a8a8a" stroke-width="1"/><rect x="362.5" y="64.5" width="4.5" height="4.5" fill="#fff" stroke="#8a8a8a" stroke-width="1"/>
<path d="M63.5,39.5 L74,50" stroke="#1e3c6a" stroke-width="5" stroke-linecap="butt"/><path d="M63.5,39.5 L73,49" stroke="#3f6fb0" stroke-width="1.3"/>
<path d="M72.2,51.8 L75.8,48.2 L77,52.8 Z" fill="#fff" stroke="#222" stroke-width="0.8"/><path d="M75.8,52 L77,52.8 L76.4,51.2 Z" fill="#000"/>
</svg>

</body></html>
